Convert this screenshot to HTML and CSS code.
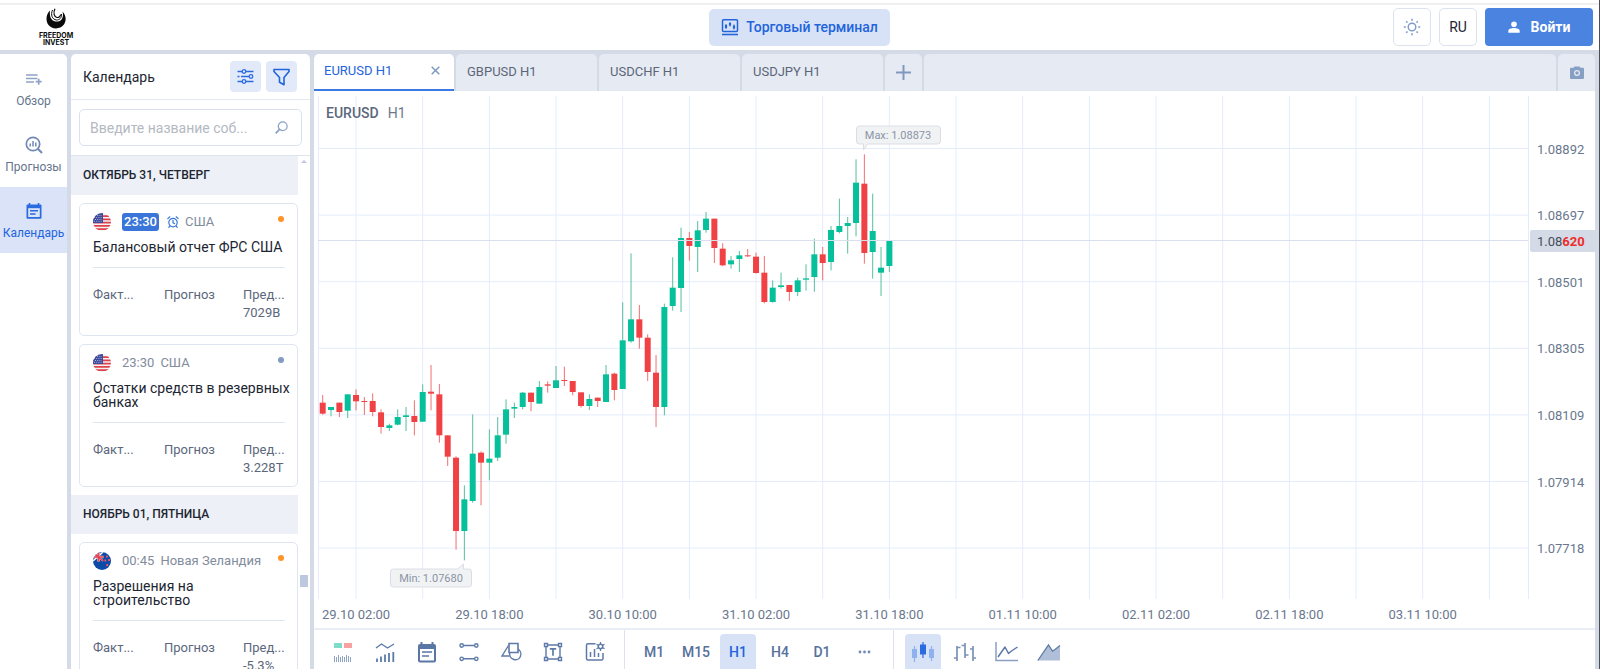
FILE: index.html
```html
<!DOCTYPE html>
<html lang="ru">
<head>
<meta charset="utf-8">
<title>Торговый терминал</title>
<link rel="stylesheet" href="styles.css">
</head>
<body>
<svg class="defs" aria-hidden="true">
  <symbol id="flag-us" viewBox="0 0 18 18">
    <clipPath id="round"><circle cx="9" cy="9" r="9"/></clipPath>
    <g clip-path="url(#round)">
      <rect width="18" height="18" fill="#f3f1f4"/>
      <path d="M0 3.2h18M0 6.4h18M0 9.6h18M0 12.8h18M0 16.2h18" stroke="#e0424a" stroke-width="1.7"/>
      <rect width="10" height="10" fill="#3b4a9c"/>
      <path d="M2 2.500h7M1 4.500h8M2 6.500h7M1 8.300h8" stroke="#c9cdea" stroke-width=".8" stroke-dasharray="1 1.200"/>
    </g>
  </symbol>
  <symbol id="flag-nz" viewBox="0 0 18 18">
    <g clip-path="url(#round)">
      <rect width="18" height="18" fill="#0d4ba8"/>
      <path d="M0 0l10 9M10 0L0 9" stroke="#fff" stroke-width="1.500"/>
      <path d="M5.500 0v9.500M0 5h10.500" stroke="#f3c9d2" stroke-width="2.600"/>
      <path d="M5.500 0v9.500M0 5h10.500M1 1l9 8" stroke="#e8424f" stroke-width="1.600"/>
      <path d="M14 3.500v2M12.300 7.500v2M16 7v2M14.200 12v2.200" stroke="#f0566a" stroke-width="1.800"/>
    </g>
  </symbol>
  <symbol id="alarm" viewBox="0 0 12 12">
    <g fill="none" stroke="#3577dc" stroke-width="1.200" stroke-linecap="round" stroke-linejoin="round">
      <circle cx="6" cy="6.600" r="4.200"/><path d="M6 4.300v2.500l1.500.8M.8 2.600L2.800.8M11.200 2.600L9.200.8M2.800 10.200l-1 1.100M9.200 10.200l1 1.100"/>
    </g>
  </symbol>
</svg>

<header class="topbar">
  <a class="logo" href="#">
    <svg width="22" height="21" viewBox="0 0 22 21" aria-hidden="true">
      <path d="M5 2.500C-1 8 .5 20 11 20.500 21.500 20 23 9 17.500 3.500c1.500 5-.5 9.500-4.500 10-5 .6-9-2.500-8-11z" fill="#0a0a0a"/>
      <path d="M7.500 2C5.500 6.500 7 11.500 11.500 12c3 .2 5.500-2.500 5-6" fill="none" stroke="#0a0a0a" stroke-width="1"/>
      <path d="M10 .8C8 4.500 9 9 12 9.500c2 .2 3.500-1.200 3.500-3" fill="none" stroke="#0a0a0a" stroke-width="1.200"/>
    </svg>
    <span>FREEDOM</span><span>INVEST</span>
  </a>
  <a class="terminal" href="#">
    <svg width="18" height="18" viewBox="0 0 18 18" fill="none" stroke="#2264dc" aria-hidden="true">
      <rect x="1.500" y="1.800" width="15" height="11.700" rx="1" stroke-width="1.500"/>
      <path d="M1 16.500h16" stroke-width="1.600"/>
      <path d="M5 6v5M9 4v4.500M13 6.500v5" stroke-width="1"/>
      <path d="M5 7v3M9 5v2.500M13 7.500v3" stroke-width="2.200"/>
    </svg>
    Торговый терминал
  </a>
  <div class="account">
    <button class="square" aria-label="Светлая тема">
      <svg width="18" height="18" viewBox="0 0 18 18" fill="none" stroke="#7d9bc8" aria-hidden="true">
        <circle cx="9" cy="9" r="3.800" stroke-width="1.400"/>
        <path d="M9 .8v2M9 15.200v2M.8 9h2M15.200 9h2M3.200 3.200l1.300 1.300M13.500 13.500l1.300 1.300M3.200 14.800l1.300-1.300M13.500 4.500l1.300-1.300" stroke-width="1.600"/>
      </svg>
    </button>
    <button class="square">RU</button>
    <button class="login">
      <svg width="12" height="12" viewBox="0 0 12 12" fill="#fff" aria-hidden="true"><circle cx="6" cy="3.200" r="2.800"/><path d="M.3 11.800V10C.3 8 3.500 7.100 6 7.100s5.700.9 5.700 2.900v1.800z"/></svg>
      Войти
    </button>
  </div>
</header>

<main class="workspace">
  <nav class="rail">
    <a href="#">
      <svg width="18" height="18" viewBox="0 0 18 18" fill="none" stroke="#8ea3c6" stroke-width="1.700" aria-hidden="true"><path d="M1 5h11.500M1 8.500h11.500M1 12h8M13.700 8.700v6M10.700 11.700h6"/></svg>
      Обзор
    </a>
    <a href="#">
      <svg width="18" height="18" viewBox="0 0 18 18" fill="none" stroke="#7089b5" aria-hidden="true"><circle cx="8" cy="8" r="6.700" stroke-width="1.700"/><path d="M12.800 12.800l4.200 4.200" stroke-width="2"/><path d="M5.200 7.500v3M8 5v5.500M10.800 6.500v4" stroke-width="1.500"/></svg>
      Прогнозы
    </a>
    <a href="#" class="current">
      <svg width="18" height="18" viewBox="0 0 18 18" aria-hidden="true"><path d="M2.500 2.500h13q1 0 1 1v12.200q0 1-1 1h-13q-1 0-1-1V3.500q0-1 1-1z" fill="#2a6be0"/><path d="M4.500 1v3M13.500 1v3" stroke="#2a6be0" stroke-width="1.600"/><path d="M3.200 6.200h11.600v8.800H3.200z" fill="#dae3f8"/><path d="M5 8.700h8M5 12h5.500" stroke="#2a6be0" stroke-width="1.500"/></svg>
      Календарь
    </a>
  </nav>

  <section class="calendar">
    <div class="calendar-head">
      <h2>Календарь</h2>
      <button aria-label="Настройки">
        <svg width="17" height="17" viewBox="0 0 17 17" fill="none" stroke="#2a6be0" stroke-width="1.300" aria-hidden="true"><path d="M.5 3.500H5M9 3.500h7.500M.5 8.500h2M4 8.500h8M.5 13.500H5M9 13.500h7.500"/><circle cx="7" cy="3.500" r="1.800"/><circle cx="14" cy="8.500" r="1.800"/><circle cx="7" cy="13.500" r="1.800"/></svg>
      </button>
      <button aria-label="Фильтр">
        <svg width="17" height="18" viewBox="0 0 17 18" fill="none" stroke="#2264dc" stroke-width="1.600" stroke-linejoin="round" aria-hidden="true"><path d="M1 1.500h15v2l-5 6v7.200l-4.500-2.500V9.500L1 3.500z"/></svg>
      </button>
    </div>
    <form class="search">
      <input type="text" placeholder="Введите название соб..." aria-label="Введите название события">
      <svg width="13" height="13" viewBox="0 0 13 13" fill="none" stroke="#8ba2c6" stroke-width="1.300" aria-hidden="true"><circle cx="7.700" cy="5.200" r="4.400"/><path d="M4.500 8.400L.7 12.300" stroke-width="1.800"/></svg>
    </form>
    <div class="feed">
      <div class="events">
        <h3>Октябрь 31, четверг</h3>
        <article class="event roomy">
          <header><svg class="flag"><use href="#flag-us"/></svg><time class="soon">23:30</time><svg class="alarm"><use href="#alarm"/></svg><span>США</span><i class="dot high"></i></header>
          <h4>Балансовый отчет ФРС США</h4>
          <dl><div><dt>Факт...</dt><dd></dd></div><div><dt>Прогноз</dt><dd></dd></div><div><dt>Пред...</dt><dd>7029B</dd></div></dl>
        </article>
        <article class="event">
          <header><svg class="flag"><use href="#flag-us"/></svg><time>23:30</time><span>США</span><i class="dot"></i></header>
          <h4>Остатки средств в резервных банках</h4>
          <dl><div><dt>Факт...</dt><dd></dd></div><div><dt>Прогноз</dt><dd></dd></div><div><dt>Пред...</dt><dd>3.228T</dd></div></dl>
        </article>
        <h3>Ноябрь 01, пятница</h3>
        <article class="event">
          <header><svg class="flag"><use href="#flag-nz"/></svg><time>00:45</time><span>Новая Зеландия</span><i class="dot high"></i></header>
          <h4>Разрешения на<br>строительство</h4>
          <dl><div><dt>Факт...</dt><dd></dd></div><div><dt>Прогноз</dt><dd></dd></div><div><dt>Пред...</dt><dd>-5.3%</dd></div></dl>
        </article>
      </div>
      <div class="scrollbar"><i class="arrow"></i><i class="thumb"></i></div>
    </div>
  </section>

  <section class="terminal-panel">
    <div class="tabs">
      <button class="tab active">EURUSD H1
        <svg width="9" height="9" viewBox="0 0 9 9" stroke="#7d9ac4" stroke-width="1.500" aria-hidden="true"><path d="M.7.7l7.600 7.600M8.300.7L.7 8.300"/></svg>
      </button>
      <button class="tab">GBPUSD H1</button>
      <button class="tab">USDCHF H1</button>
      <button class="tab">USDJPY H1</button>
      <button class="tab icon" aria-label="Добавить"><svg width="15" height="15" viewBox="0 0 15 15" stroke="#8098c0" stroke-width="2" aria-hidden="true"><path d="M7.500 0v15M0 7.500h15"/></svg></button>
      <div class="tab filler"></div>
      <button class="tab icon" aria-label="Снимок"><svg width="14" height="13" viewBox="0 0 14 13" aria-hidden="true"><path d="M1 1.800h2.500L4.500.4h5l1 1.400H13q1 0 1 1V12q0 1-1 1H1q-1 0-1-1V2.800q0-1 1-1z" fill="#86a0c4"/><circle cx="7" cy="7" r="2.400" fill="none" stroke="#e6eaf3" stroke-width="1.300"/></svg></button>
    </div>
    <div class="chart">
      <p class="symbol"><b>EURUSD</b>H1</p>
      <svg id="chart" role="img" aria-label="EURUSD H1"></svg>
    </div>
    <div class="toolbar">
      <div class="group">
        <button aria-label="Покупка и продажа"><svg width="20" height="20" viewBox="0 0 20 20" aria-hidden="true"><path d="M1 1h8v5H1z" fill="#7fdcc8"/><path d="M11 1h8v5h-8z" fill="#f7a1a0"/><path d="M1.500 14v6M3.500 15v5M5.500 13v7M7.500 15v5M9.500 14v6M11.500 15v5M13.500 13v7M15.500 14v6M17.500 15v5" stroke="#8fa3c4"/></svg></button>
        <button aria-label="Индикаторы"><svg width="20" height="20" viewBox="0 0 20 20" fill="none" stroke="#5d7aa8" aria-hidden="true"><path d="M1 6l5.500-4 6 4L19 2" stroke-width="1.400"/><path d="M2 16.500V20M6 14.500V20M10 12.500V20M14 11v9M18.300 10v10" stroke-width="1.800"/></svg></button>
        <button aria-label="События"><svg width="20" height="21" viewBox="0 0 20 21" aria-hidden="true"><rect x="1" y="2" width="18" height="18.500" rx="2" fill="#5a76a4"/><path d="M4.500 0v4M15.500 0v4" stroke="#5a76a4" stroke-width="2"/><path d="M3 7h14v11.500H3z" fill="#fff"/><path d="M5 10h10M5 14h7" stroke="#5a76a4" stroke-width="1.600"/></svg></button>
        <button aria-label="Линии"><svg width="20" height="20" viewBox="0 0 20 20" fill="none" stroke="#5d7aa8" stroke-width="1.400" aria-hidden="true"><path d="M4.500 3.500h11M4.500 16.800h11"/><circle cx="2.700" cy="3.500" r="1.700"/><circle cx="17.300" cy="3.500" r="1.700"/><circle cx="2.700" cy="16.800" r="1.700"/><circle cx="17.300" cy="16.800" r="1.700"/></svg></button>
        <button aria-label="Фигуры"><svg width="21" height="20" viewBox="0 0 21 20" fill="none" stroke="#5d7aa8" stroke-width="1.400" aria-hidden="true"><path d="M7.500 3.500L1 14h7.500"/><path d="M8 1.500h9v9H8z" stroke-width="1.600"/><path d="M17 7.200a5.600 5.600 0 1 1-8.300 4.300V10.500"/></svg></button>
        <button aria-label="Текст"><svg width="20" height="20" viewBox="0 0 20 20" fill="none" stroke="#5d7aa8" stroke-width="1.400" aria-hidden="true"><path d="M4.500 3h11M4.500 17h11M3 4.500v11M17 4.500v11"/><path d="M1.500 1.500h3v3h-3zM15.500 1.500h3v3h-3zM1.500 15.500h3v3h-3zM15.500 15.500h3v3h-3z"/><path d="M6.800 6.800h6.400M10 6.800v7" stroke-width="1.700"/></svg></button>
        <button aria-label="Настройки графика"><svg width="20" height="20" viewBox="0 0 20 20" fill="none" stroke="#5d7aa8" stroke-width="1.500" aria-hidden="true"><path d="M10.500 1.800H3q-1.500 0-1.500 1.500v13.200Q1.500 18 3 18h13.500q1.500 0 1.500-1.500V11"/><path d="M5.500 10v5M9.500 7v8M13.500 11v4"/><circle cx="15.500" cy="4.500" r="2.200"/><path d="M15.500 0v2M15.500 7v2M11.500 2.200l1.700 1M19.500 2.200l-1.700 1M11.500 6.800l1.700-1M19.500 6.800l-1.700-1" stroke-width="1.200"/></svg></button>
      </div>
      <div class="group">
        <button>M1</button><button>M15</button><button class="on">H1</button><button>H4</button><button>D1</button>
        <button aria-label="Ещё"><svg width="13" height="4" viewBox="0 0 13 4" fill="#7089b5" aria-hidden="true"><circle cx="2" cy="2" r="1.400"/><circle cx="6.500" cy="2" r="1.400"/><circle cx="11" cy="2" r="1.400"/></svg></button>
      </div>
      <div class="group">
        <button class="on" aria-label="Свечи"><svg width="24" height="22" viewBox="0 0 24 22" aria-hidden="true"><path d="M3.500 5v16M20.500 5v15" stroke="#8fb2ee" stroke-width="1.200"/><path d="M1 8h5v9H1zM18 8h5v9h-5z" fill="#8fb2ee"/><path d="M12 1v16" stroke="#2a6be0" stroke-width="1.200"/><path d="M9 3.500h6v10H9z" fill="#2a6be0"/></svg></button>
        <button aria-label="Бары"><svg width="24" height="22" viewBox="0 0 24 22" fill="none" stroke="#7b92ba" stroke-width="1.700" aria-hidden="true"><path d="M4 5v15M1 17h3M4 6.500h3.500M12 2v15M8.500 4.500H12M12 14h3.500M20 5v15M17 8h3M20 17h3"/></svg></button>
        <button aria-label="Линия"><svg width="24" height="22" viewBox="0 0 24 22" fill="none" stroke="#5d7aa8" aria-hidden="true"><path d="M1 1v18.500h22" stroke="#8ba0c4" stroke-width="1.500"/><path d="M3 16l7-10 3.500 6.500 3-2.500L22.500 6" stroke-width="1.500" stroke-linejoin="round"/></svg></button>
        <button aria-label="Область"><svg width="24" height="22" viewBox="0 0 24 22" aria-hidden="true"><path d="M.8 19.500L11.500 4l4 6 2.500-1.500 5-4v15z" fill="#afbfd7"/><path d="M.8 19.500L11.500 4l4 6 2.500-1.500 5-4" fill="none" stroke="#5d7aa8" stroke-width="1.300"/></svg></button>
      </div>
    </div>
  </section>
</main>
<script src="chart.js"></script>
</body>
</html>
```

FILE: styles.css
```css
* { box-sizing: border-box; }
body {
  margin: 0;
  height: 100vh;
  display: flex;
  flex-direction: column;
  overflow: hidden;
  border-right: 1px solid #4a4e57;
  background: #d4dbe7;
  color: #1c2532;
  font: 13px/18px Roboto, "Noto Sans", sans-serif;
}
h2, h3, h4, p, dl, dd { margin: 0; }
button { font: inherit; color: inherit; border: 0; padding: 0; background: none; cursor: pointer; }
a { color: inherit; text-decoration: none; }
svg { display: block; flex: none; }
.defs { position: absolute; width: 0; height: 0; }

.topbar {
  display: grid;
  grid-template-columns: 1fr auto 1fr;
  align-items: center;
  height: 50px;
  padding: 5px 6px 1px;
  background: linear-gradient(#fff 3px, #ededee 3px, #f3f3f3 5px, #fff 5px);
  flex: none;
}
.logo {
  justify-self: start;
  display: flex;
  flex-direction: column;
  align-items: center;
  margin-left: 33px;
  font: 700 7px/7px Inter, sans-serif;
  color: #0a0a0a;
}
.logo svg { margin-bottom: 3px; }
.terminal {
  display: flex;
  align-items: center;
  gap: 7px;
  height: 37px;
  padding: 0 12px;
  border-radius: 5px;
  background: #d8e2f7;
  color: #2264dc;
  font-size: 14px;
  font-weight: 500;
}
.account { justify-self: end; display: flex; gap: 8px; }
.account button { height: 38px; display: flex; align-items: center; justify-content: center; }
.square { width: 38px; border: 1px solid #dce3ef; border-radius: 5px; background: #fff; }
.account .square { border: 1px solid #dce3ef; font-size: 14px; }
.login { width: 108px; gap: 11px; border-radius: 4px; background: #4a83e0; }
.account .login { color: #fff; font-size: 14px; font-weight: 700; }

.workspace { flex: 1; min-height: 0; display: flex; gap: 4px; padding: 4px 4px 0 0; }
.rail { width: 67px; flex: none; background: #fff; border-radius: 0 5px 0 0; padding-top: 1px; }
.rail a {
  display: flex;
  flex-direction: column;
  align-items: center;
  gap: 4px;
  height: 66px;
  padding-top: 15px;
  color: #66758e;
  font-size: 12px;
}
.rail .current { background: #dae3f8; color: #2264dc; }

.calendar { width: 239px; flex: none; display: flex; flex-direction: column; background: #fff; border-radius: 5px 5px 0 0; }
.calendar-head { display: flex; align-items: center; gap: 5px; height: 46px; flex: none; padding: 0 13px 0 12px; border-bottom: 1px solid #e3e8f2; }
.calendar-head h2 { flex: 1; font-size: 14px; font-weight: 400; }
.calendar-head button { width: 31px; height: 31px; display: grid; place-items: center; border-radius: 4px; background: #e2eafa; }
.search { display: flex; align-items: center; height: 37px; flex: none; margin: 9px 8px; padding: 0 13px 0 10px; border: 1px solid #dae1ee; border-radius: 5px; }
.search input { flex: 1; min-width: 0; border: 0; padding: 0; outline: 0; font: inherit; font-size: 14px; background: none; }
.search input::placeholder { color: #b4b9c2; }
.feed { flex: 1; min-height: 0; display: flex; border-top: 1px solid #dfe5ef; overflow: hidden; }
.events { width: 227px; }
.events h3 { height: 39px; padding-left: 12px; background: #edf0f6; font-size: 12px; line-height: 39px; font-weight: 500; text-transform: uppercase; }
.event { margin: 8px 0 8px 8px; padding: 9px 12px 9px 13px; border: 1px solid #dfe5f0; border-radius: 5px; }
.event.roomy { padding-bottom: 13px; }
.event header { display: flex; align-items: center; height: 18px; color: #828c9c; }
.flag { width: 18px; height: 18px; margin-right: 11px; }
.event time { margin-right: 6px; }
.event .soon { margin-right: 8px; padding: 0 2px; border-radius: 3px; background: #3a75da; color: #fff; font-weight: 500; }
.alarm { width: 12px; height: 12px; margin-right: 6px; }
.dot { width: 6px; height: 6px; margin: -7px 1px 0 auto; border-radius: 3px; background: #839bc1; }
.dot.high { background: #ff9427; }
.event h4 { margin: 9px -8px 13px 0; font-size: 14px; line-height: 14px; font-weight: 400; }
.event dl { display: grid; grid-template-columns: 71px 79px 1fr; padding-top: 18px; border-top: 1px solid #e0e6ef; color: #5b677b; }
.event dt { white-space: nowrap; }
.scrollbar { width: 12px; display: flex; flex-direction: column; align-items: center; padding-top: 4px; }
.arrow { border: 3px solid transparent; border-top: 0; border-bottom-color: #bccae0; }
.thumb { width: 8px; height: 12px; margin-top: 412px; background: #bcc8de; }

.terminal-panel { flex: 1; min-width: 0; display: flex; flex-direction: column; }
.tabs { display: flex; gap: 2px; height: 37px; flex: none; }
.tab {
  display: flex;
  align-items: center;
  justify-content: space-between;
  width: 141px;
  padding: 0 14px 2px 11px;
  border-radius: 5px 5px 0 0;
  background: #e6eaf3;
  color: #5b6678;
}
.tab.active { width: 140px; padding: 0 14px 2px 10px; border-bottom: 2px solid #397be2; background: #fff; color: #2264dc; }
.tab.icon { width: 37px; padding: 0; justify-content: center; }
.tab.filler { flex: 1; }
.chart { position: relative; flex: 1; min-height: 0; background: #fff; }
.chart #chart { width: 100%; height: 100%; }
.symbol { position: absolute; left: 12px; top: 13px; color: #6c7889; font-size: 14px; }
.symbol b { margin-right: 9px; color: #5b677b; font-weight: 500; }
.grid { stroke: #e4ecfb; }
.level { stroke: #d9dfec; }
.axis { fill: #6a778d; font-size: 13px; }
.axis.time { text-anchor: middle; }
.badge { fill: #d4dae6; }
.quote { fill: #424d5d; font-size: 13px; }
.quote .pips { fill: #ee2c2c; font-weight: 700; }
.up { fill: #05c09a; }
.down { fill: #f04245; }
.wick-up { stroke: #55bf9f; }
.wick-down { stroke: #f06f70; }
.note { fill: #f0f2f4; stroke: #dadee4; }
.note-text { fill: #8b95a5; font-size: 11px; text-anchor: middle; }

.toolbar { display: flex; height: 41px; flex: none; overflow: hidden; border-top: 2px solid #e9edf5; background: #fff; }
.group { display: flex; gap: 6px; height: 39px; padding: 4px 11px; }
.group + .group { border-left: 1px solid #dce2ee; }
.group button { width: 36px; height: 36px; display: grid; place-items: center; border-radius: 4px 4px 0 0; color: #56719c; font-size: 14px; font-weight: 500; }
.group button.on { background: #d8e2f7; color: #2264dc; }
```

FILE: chart.js
```js
const STEP = 25 / 3;
const FIRST = 8.7;

// Candle rows: direction, high, body top, body bottom, low (thirds of a pixel below the block's base)
const blocks = [
  { base: 249, rows: [
    [0,165,188,221,224],[1,201,201,210,229],[0,188,188,216,231],[1,163,163,212,234],[0,148,165,184,211],
    [0,171,183,186,225],[0,160,183,216,229],[0,208,217,261,281],[1,251,256,264,273],[1,208,231,254,256],
    [1,201,226,231,273],[0,181,228,246,286],[1,133,156,245,245],[0,75,155,161,211],[0,132,163,286,308],
    [0,286,286,350,378],[0,349,353,573,629],[1,436,478,573,661],[1,223,341,483,488],[0,334,338,368,496],
    [1,268,356,368,421],[1,231,286,353,363],[1,178,208,284,311],[1,188,201,206,234],[1,156,158,201,208],
    [0,158,158,186,214],[1,123,141,191,191],[0,124,133,137,158],[1,78,121,144,144]] },
  { base: 109, rows: [
    [0,500,540,543,558],[0,543,543,576,586],[0,577,577,618,623],[1,583,597,618,630],[0,593,593,603,621],
    [1,495,523,606,606],[0,518,521,570,601],[1,307,421,567,567],[1,160,358,424,428],[0,315,358,413,446],
    [0,403,413,516,543],[0,465,518,621,681],[1,311,321,621,646],[1,172,263,318,332],[1,83,114,264,336],
    [0,96,114,138,182],[1,63,91,141,216],[1,36,56,90,98],[0,56,56,144,189],[0,130,146,196,199],
    [1,168,181,193,206],[1,153,166,177,216]] },
  { base: 19, rows: [
    [0,417,436,439,441],[0,428,440,489,491],[0,438,488,576,580],[1,511,533,576,578],[1,488,526,531,536],
    [0,525,525,546,573],[1,503,511,546,558],[1,463,505,509,542],[1,386,433,501,545],[0,411,433,459,511],
    [1,348,360,456,481],[1,266,348,366,370],[1,321,339,348,431],[1,148,218,339,379],[0,133,221,429,461],
    [1,251,363,426,506],[1,411,473,488,558],[1,393,393,468,486]] }
];
const candles = blocks.flatMap(b => b.rows.map(r => [r[0], ...r.slice(1).map(v => b.base + v / 3)]));
const prices = ['1.08892', '1.08697', '1.08501', '1.08305', '1.08109', '1.07914', '1.07718'];
const times = ['29.10 02:00', '29.10 18:00', '30.10 10:00', '31.10 02:00', '31.10 18:00',
  '01.11 10:00', '02.11 02:00', '02.11 18:00', '03.11 10:00'];

const svg = document.getElementById('chart');

function draw() {
  const w = svg.clientWidth;
  const h = svg.clientHeight;
  const right = w - 66.5;
  const bottom = h - 29;
  const line = (x1, y1, x2, y2, c) => `<line x1="${x1}" y1="${y1}" x2="${x2}" y2="${y2}" class="${c}"/>`;
  let out = line(4.5, 5, 4.5, bottom, 'grid') + line(right, 5, right, bottom, 'grid');

  for (let x = FIRST + 4 * STEP; x < right; x += 8 * STEP) {
    out += line(x, 5, x, bottom, 'grid');
  }
  prices.forEach((p, i) => {
    const y = 57.5 + i * 66.6;
    out += line(4, y, right, y, 'grid');
    out += `<text x="${w - 58}" y="${y + 5}" class="axis">${p}</text>`;
  });
  times.forEach((t, i) => {
    const x = FIRST + (4 + 16 * i) * STEP;
    if (x < right) out += `<text x="${x}" y="${bottom + 20}" class="axis time">${t}</text>`;
  });
  candles.forEach(([up, high, top, base, low], i) => {
    const x = FIRST + i * STEP;
    const dir = up ? 'up' : 'down';
    out += line(x, high, x, low, 'wick-' + dir);
    out += `<rect x="${x - 3}" y="${top}" width="6" height="${Math.max(base - top, 1)}" class="${dir}"/>`;
  });

  out += line(4, 149.5, right, 149.5, 'level');
  out += `<path d="M${w - 63} 139h63v22h-63q-2 0-2-2v-18q0-2 2-2z" class="badge"/>`;
  out += `<text x="${w - 58}" y="155" class="quote">1.08<tspan class="pips">620</tspan></text>`;
  out += '<path d="M545.5 35h78q3 0 3 3v12q0 3-3 3h-70l-4 6v-6h-4q-3 0-3-3V38q0-3 3-3z" class="note"/>';
  out += '<text x="584" y="48" class="note-text">Max: 1.08873</text>';
  out += '<path d="M79.500 478h64l6-5v5h5q3 0 3 3v12q0 3-3 3h-75q-3 0-3-3v-12q0-3 3-3z" class="note"/>';
  out += '<text x="117" y="491" class="note-text">Min: 1.07680</text>';
  svg.innerHTML = out;
}

draw();
window.addEventListener('resize', draw);
```
